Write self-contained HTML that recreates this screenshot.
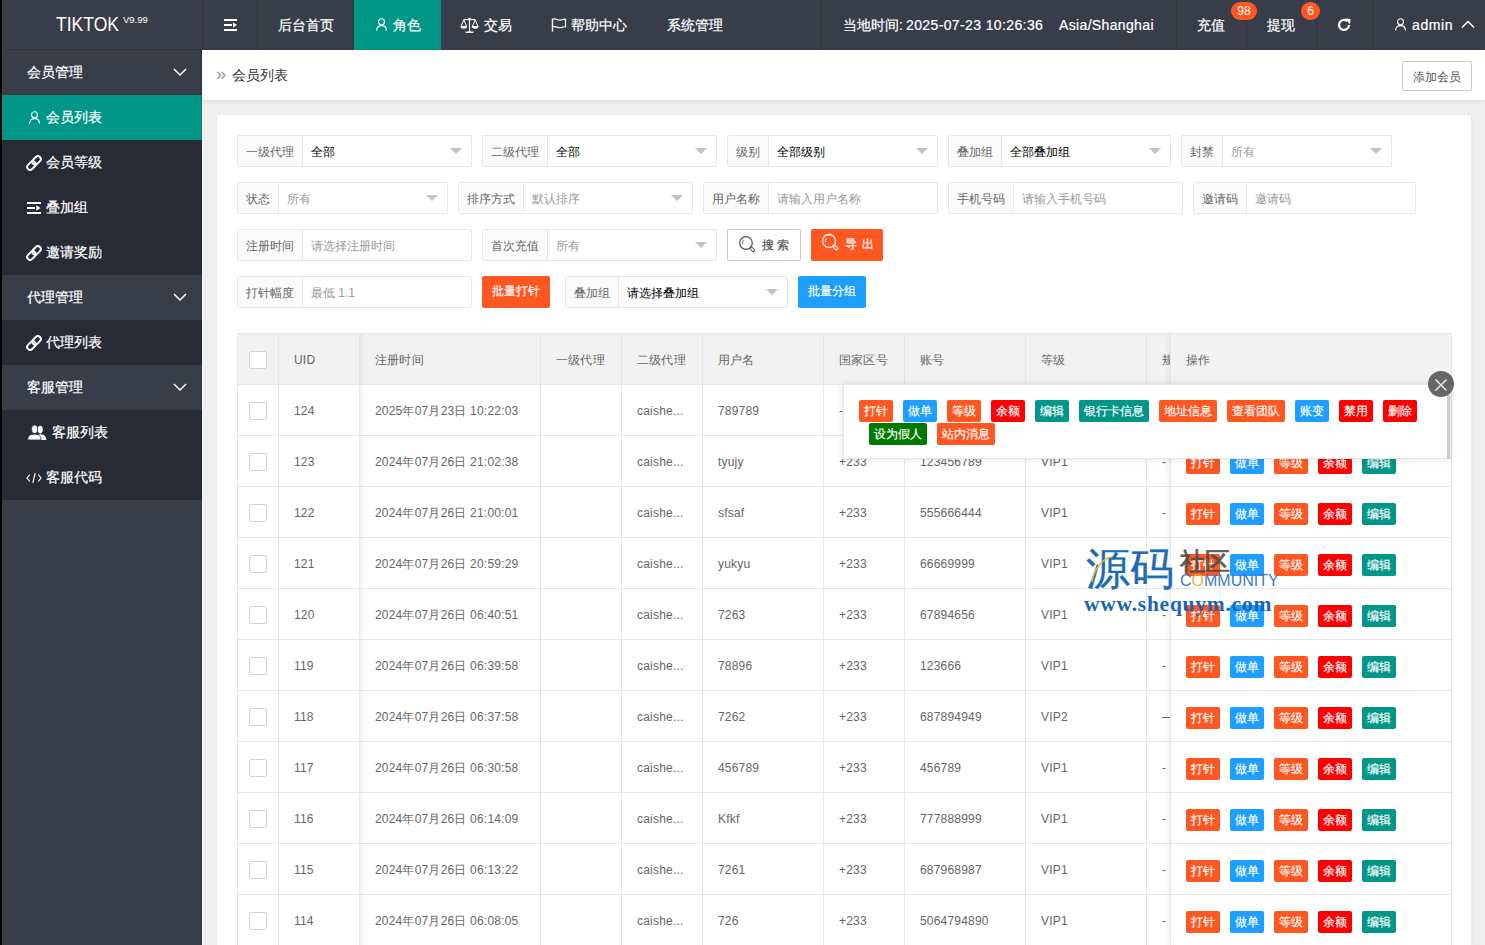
<!DOCTYPE html><html><head><meta charset="utf-8"><style>
*{box-sizing:border-box;margin:0;padding:0}
html,body{width:1485px;height:945px;overflow:hidden;background:#eee;font-family:"Liberation Sans",sans-serif;color:#666;font-size:14px}
.abs{position:absolute}
svg{display:block}
#strip{left:0;top:0;width:2px;height:945px;background:#000;z-index:50}
#header{left:0;top:0;width:1485px;height:50px;background:#393D49;color:#fff}
#logo{left:0;top:0;width:202px;height:50px;border-bottom:1px solid #30333d}
#logo .t{position:absolute;left:56px;top:13px;font-size:19.5px;line-height:22px;transform:scaleX(0.9);transform-origin:0 0}
#logo .v{position:absolute;left:123px;top:15px;font-size:9.5px;line-height:10px}
.nav{position:absolute;top:0;height:50px;line-height:50px;font-size:14px;color:#fff;white-space:nowrap;-webkit-text-stroke:0.2px #fff}
.vl{position:absolute;top:0;width:1px;height:50px;background:#30333e}
#side{left:0;top:50px;width:202px;height:895px;background:#393D49}
.si{position:absolute;left:0;width:202px;height:45px;line-height:45px;color:#fff;font-size:14px;white-space:nowrap;-webkit-text-stroke:0.2px #fff}
.si.c{background:#282B33}
.si.on{background:#009688}
.si .tx{position:absolute;top:0}
.si .ic{position:absolute}
#crumb{left:202px;top:50px;width:1283px;height:50px;background:#fff;box-shadow:0 1px 4px rgba(0,0,0,.1)}
#card{left:217px;top:115px;width:1255px;height:830px;background:#fff;box-shadow:0 1px 2px rgba(0,0,0,.05);border-right:1px solid #e8e8e8}
.fi{position:absolute;height:32px;border:1px solid #e6e6e6;border-radius:2px;background:#fff;font-size:12px;line-height:30px;white-space:nowrap}
.fi .lb{position:absolute;left:0;top:0;height:30px;background:#FBFBFB;border-right:1px solid #e6e6e6;color:#666;text-align:center;padding-top:1px}
.fi .val{position:absolute;top:1px;left:0;color:#000}
.fi .ph{position:absolute;top:1px;left:0;color:#999}
.fi .car{position:absolute;right:9px;top:12px;width:0;height:0;border-left:6px solid transparent;border-right:6px solid transparent;border-top:6px solid #c2c2c2}
.btn{position:absolute;color:#fff;font-size:12px;text-align:center;border-radius:2px;white-space:nowrap;-webkit-text-stroke:0.2px}
#tbl{left:237px;top:333px;width:1215px;height:612px;border:1px solid #e6e6e6;border-bottom:none;background:#fff;overflow:hidden}
.cell{position:absolute;font-size:12px;color:#666;white-space:nowrap;line-height:20px;letter-spacing:0.2px}
.hl{position:absolute;left:0;height:1px;background:#e6e6e6}
.vln{position:absolute;width:1px;background:#e6e6e6}
.cb{position:absolute;width:18px;height:18px;border:1px solid #d2d2d2;border-radius:2px;background:#fff}
.xs{position:absolute;height:22px;line-height:22px;font-size:12px;color:#fff;text-align:center;border-radius:2px;white-space:nowrap;-webkit-text-stroke:0.15px #fff}
</style></head><body>
<div id="strip" class="abs"></div>
<div id="header" class="abs">
<div id="logo" class="abs"><span class="t">TIKTOK</span><span class="v">V9.99</span></div>
<div class="vl" style="left:202px"></div>
<div class="vl" style="left:257px"></div>
<div class="vl" style="left:821px"></div>
<div class="vl" style="left:1176px"></div>
<div class="vl" style="left:1246px"></div>
<div class="vl" style="left:1316px"></div>
<div class="vl" style="left:1372px"></div>
<svg class="abs" style="left:224px;top:19px" width="14" height="12" viewBox="0 0 14 12"><rect x="0" y="0" width="13" height="2" fill="#fff"/><rect x="0" y="5" width="8" height="2" fill="#fff"/><rect x="0" y="10" width="13" height="2" fill="#fff"/><path d="M9 3.5 L13 6 L9 8.5Z" fill="#fff"/></svg>
<div class="nav" style="left:278px">后台首页</div>
<div class="abs" style="left:354px;top:0;width:87px;height:50px;background:#009688"></div>
<svg class="abs" style="left:376px;top:18px" width="11" height="13" viewBox="0 0 11 13"><circle cx="5.5" cy="3.7" r="3" fill="none" stroke="#fff" stroke-width="1.15"/><path d="M0.6 12.5 C0.6 9.2 2.6 7.6 5.5 7.6 C8.4 7.6 10.4 9.2 10.4 12.5" fill="none" stroke="#fff" stroke-width="1.15"/></svg>
<div class="nav" style="left:393px">角色</div>
<svg class="abs" style="left:460px;top:17px" width="20" height="17" viewBox="0 0 20 17"><g stroke="#fff" fill="none"><path d="M9.5 2.5 V15" stroke-width="1.2"/><path d="M3.5 2.6 H15.5" stroke-width="1.1"/><path d="M5.5 15.2 H13.5" stroke-width="1.4"/><path d="M3.8 3 L1 9.3 M3.8 3 L6.6 9.3 M15.2 3 L12.4 9.3 M15.2 3 L18 9.3" stroke-width="1"/></g><circle cx="9.5" cy="2" r="1.3" fill="#fff"/><path d="M0.4 9.1 H7.2 A3.4 2.6 0 0 1 0.4 9.1Z M11.8 9.1 H18.6 A3.4 2.6 0 0 1 11.8 9.1Z" fill="#fff"/></svg>
<div class="nav" style="left:484px">交易</div>
<svg class="abs" style="left:551px;top:18px" width="16" height="14" viewBox="0 0 16 14"><path d="M1.5 0.5 V13.5" stroke="#fff" stroke-width="1.5"/><path d="M2 1.2 C5 0 7 3 10 2 C12 1.4 13 1 14.5 1.2 V8.8 C13 8.6 12 9 10 9.6 C7 10.6 5 7.6 2 8.8" fill="none" stroke="#fff" stroke-width="1.2"/></svg>
<div class="nav" style="left:571px">帮助中心</div>
<div class="nav" style="left:667px">系统管理</div>
<div class="nav" style="left:843px">当地时间:</div>
<div class="nav" style="left:906px;letter-spacing:0.38px">2025-07-23 10:26:36</div>
<div class="nav" style="left:1059px;letter-spacing:0.35px">Asia/Shanghai</div>
<div class="nav" style="left:1197px">充值</div>
<div class="abs" style="left:1231px;top:2px;width:26px;height:18px;border-radius:9px;background:#FF5722;color:#fff;font-size:12px;line-height:18px;text-align:center">98</div>
<div class="nav" style="left:1267px">提现</div>
<div class="abs" style="left:1301px;top:2px;width:19px;height:18px;border-radius:9px;background:#FF5722;color:#fff;font-size:12px;line-height:18px;text-align:center">6</div>
<svg class="abs" style="left:1337px;top:18px" width="14" height="14" viewBox="0 0 14 14"><path d="M12 7 A5 5 0 1 1 10.3 3.2" fill="none" stroke="#fff" stroke-width="2.2"/><path d="M8 0.5 L13.5 1 L13 6.5 Z" fill="#fff"/></svg>
<svg class="abs" style="left:1395px;top:18px" width="11" height="13" viewBox="0 0 11 13"><circle cx="5.5" cy="3.7" r="3" fill="none" stroke="#fff" stroke-width="1.15"/><path d="M0.6 12.5 C0.6 9.2 2.6 7.6 5.5 7.6 C8.4 7.6 10.4 9.2 10.4 12.5" fill="none" stroke="#fff" stroke-width="1.15"/></svg>
<div class="nav" style="left:1412px;letter-spacing:0.6px">admin</div>
<svg class="abs" style="left:1461px;top:20px" width="14" height="8" viewBox="0 0 14 8"><path d="M1 7.5 L7 1.5 L13 7.5" fill="none" stroke="#fff" stroke-width="1.5"/></svg>
</div>
<div id="side" class="abs">
<div class="si g" style="top:0px"><span class="tx" style="left:27px">会员管理</span><svg class="ic" style="left:173px;top:18px" width="14" height="9" viewBox="0 0 14 9"><path d="M1 1 L7 7 L13 1" fill="none" stroke="#fff" stroke-width="1.5"/></svg></div>
<div class="si on" style="top:45px"><span class="tx" style="left:46px">会员列表</span><svg class="ic" style="left:29px;top:16px" width="11" height="13" viewBox="0 0 11 13"><circle cx="5.5" cy="3.7" r="3" fill="none" stroke="#fff" stroke-width="1.15"/><path d="M0.6 12.5 C0.6 9.2 2.6 7.6 5.5 7.6 C8.4 7.6 10.4 9.2 10.4 12.5" fill="none" stroke="#fff" stroke-width="1.15"/></svg></div>
<div class="si c" style="top:90px"><span class="tx" style="left:46px">会员等级</span><svg class="ic" style="left:25px;top:14px" width="18" height="18" viewBox="0 0 18 18"><g transform="rotate(-45 9 9)" fill="none" stroke="#fff" stroke-width="2"><rect x="0.6" y="6.1" width="9.6" height="5.8" rx="2.9"/><rect x="7.8" y="6.1" width="9.6" height="5.8" rx="2.9"/></g></svg></div>
<div class="si c" style="top:135px"><span class="tx" style="left:46px">叠加组</span><svg class="ic" style="left:27px;top:17px" width="15" height="12" viewBox="0 0 15 12"><rect x="0" y="0" width="14" height="2" fill="#fff"/><rect x="0" y="5" width="8" height="2" fill="#fff"/><rect x="0" y="10" width="14" height="2" fill="#fff"/><path d="M9.3 3.3 L13.6 6 L9.3 8.7Z" fill="#fff"/></svg></div>
<div class="si c" style="top:180px"><span class="tx" style="left:46px">邀请奖励</span><svg class="ic" style="left:25px;top:14px" width="18" height="18" viewBox="0 0 18 18"><g transform="rotate(-45 9 9)" fill="none" stroke="#fff" stroke-width="2"><rect x="0.6" y="6.1" width="9.6" height="5.8" rx="2.9"/><rect x="7.8" y="6.1" width="9.6" height="5.8" rx="2.9"/></g></svg></div>
<div class="si g" style="top:225px"><span class="tx" style="left:27px">代理管理</span><svg class="ic" style="left:173px;top:18px" width="14" height="9" viewBox="0 0 14 9"><path d="M1 1 L7 7 L13 1" fill="none" stroke="#fff" stroke-width="1.5"/></svg></div>
<div class="si c" style="top:270px"><span class="tx" style="left:46px">代理列表</span><svg class="ic" style="left:25px;top:14px" width="18" height="18" viewBox="0 0 18 18"><g transform="rotate(-45 9 9)" fill="none" stroke="#fff" stroke-width="2"><rect x="0.6" y="6.1" width="9.6" height="5.8" rx="2.9"/><rect x="7.8" y="6.1" width="9.6" height="5.8" rx="2.9"/></g></svg></div>
<div class="si g" style="top:315px"><span class="tx" style="left:27px">客服管理</span><svg class="ic" style="left:173px;top:18px" width="14" height="9" viewBox="0 0 14 9"><path d="M1 1 L7 7 L13 1" fill="none" stroke="#fff" stroke-width="1.5"/></svg></div>
<div class="si c" style="top:360px"><span class="tx" style="left:52px">客服列表</span><svg class="ic" style="left:27px;top:15px" width="20" height="16" viewBox="0 0 20 16"><ellipse cx="13.2" cy="4.6" rx="2.6" ry="3.8" fill="#fff"/><path d="M10 15 C10 11 11.5 9.3 13.2 9.3 C15.5 9.3 19.3 10.3 19.3 15Z" fill="#fff"/><ellipse cx="7.6" cy="4.3" rx="3" ry="4.2" fill="#fff" stroke="#282B33" stroke-width="0.8"/><path d="M0.8 15 C0.8 10.5 3 9.2 7.6 9.2 C12 9.2 14 10.5 14 15Z" fill="#fff" stroke="#282B33" stroke-width="0.8"/></svg></div>
<div class="si c" style="top:405px"><span class="tx" style="left:46px">客服代码</span><svg class="ic" style="left:26px;top:17px" width="16" height="12" viewBox="0 0 16 12"><path d="M3.8 2.5 L1 6 L3.8 9.5 M12.2 2.5 L15 6 L12.2 9.5 M9.2 1.2 L6.8 10.8" fill="none" stroke="#fff" stroke-width="1.2"/></svg></div>
<div class="abs" style="left:201px;top:0;width:1px;height:895px;background:rgba(0,0,0,.12)"></div>
</div>
<div class="abs" style="left:202px;top:100px;width:1px;height:845px;background:#fafaf8"></div>
<div id="crumb" class="abs">
<div class="abs" style="left:14px;top:13px;font-size:18px;line-height:22px;color:#999">&raquo;</div>
<div class="abs" style="left:30px;top:15px;font-size:14px;line-height:20px;color:#333">会员列表</div>
<div class="abs" style="left:1200px;top:11px;width:70px;height:30px;border:1px solid #C9C9C9;border-radius:2px;background:#fff;color:#555;font-size:12px;line-height:30px;text-align:center">添加会员</div>
</div>
<div id="card" class="abs"></div>
<div class="fi" style="left:237px;top:135px;width:235px"><div class="lb" style="width:65px">一级代理</div><div class="val" style="left:73px">全部</div><div class="car"></div></div>
<div class="fi" style="left:482px;top:135px;width:235px"><div class="lb" style="width:65px">二级代理</div><div class="val" style="left:73px">全部</div><div class="car"></div></div>
<div class="fi" style="left:727px;top:135px;width:211px"><div class="lb" style="width:41px">级别</div><div class="val" style="left:49px">全部级别</div><div class="car"></div></div>
<div class="fi" style="left:948px;top:135px;width:223px"><div class="lb" style="width:53px">叠加组</div><div class="val" style="left:61px">全部叠加组</div><div class="car"></div></div>
<div class="fi" style="left:1181px;top:135px;width:211px"><div class="lb" style="width:41px">封禁</div><div class="ph" style="left:49px">所有</div><div class="car"></div></div>
<div class="fi" style="left:237px;top:182px;width:211px"><div class="lb" style="width:41px">状态</div><div class="ph" style="left:49px">所有</div><div class="car"></div></div>
<div class="fi" style="left:458px;top:182px;width:235px"><div class="lb" style="width:65px">排序方式</div><div class="ph" style="left:73px">默认排序</div><div class="car"></div></div>
<div class="fi" style="left:703px;top:182px;width:235px"><div class="lb" style="width:65px">用户名称</div><div class="ph" style="left:73px">请输入用户名称</div></div>
<div class="fi" style="left:948px;top:182px;width:235px"><div class="lb" style="width:65px">手机号码</div><div class="ph" style="left:73px">请输入手机号码</div></div>
<div class="fi" style="left:1193px;top:182px;width:223px"><div class="lb" style="width:53px">邀请码</div><div class="ph" style="left:61px">邀请码</div></div>
<div class="fi" style="left:237px;top:229px;width:235px"><div class="lb" style="width:65px">注册时间</div><div class="ph" style="left:73px">请选择注册时间</div></div>
<div class="fi" style="left:482px;top:229px;width:235px"><div class="lb" style="width:65px">首次充值</div><div class="ph" style="left:73px">所有</div><div class="car"></div></div>
<div class="btn" style="left:727px;top:229px;width:74px;height:32px;line-height:30px;border:1px solid #C9C9C9;background:#fff;color:#555;text-align:left;padding-left:34px">搜 索</div>
<svg class="abs" style="left:738px;top:235px" width="18" height="19" viewBox="0 0 18 19"><circle cx="8" cy="8" r="6.3" fill="none" stroke="#555" stroke-width="1.2"/><path d="M4.6 9.2 A3.8 3.8 0 0 1 5.6 5.4" fill="none" stroke="#555" stroke-width="0.9"/><g transform="rotate(45 14.2 14.2)"><rect x="11.8" y="12.9" width="5.2" height="2.6" rx="1.3" fill="none" stroke="#555" stroke-width="1"/></g></svg>
<div class="btn" style="left:811px;top:229px;width:72px;height:32px;line-height:30px;background:#FF5722;text-align:left;padding-left:34px;letter-spacing:1px">导 出</div>
<svg class="abs" style="left:821px;top:233px" width="18" height="19" viewBox="0 0 18 19"><circle cx="8" cy="8" r="6.5" fill="none" stroke="#fff" stroke-width="1.3"/><path d="M4.5 9.3 A3.9 3.9 0 0 1 5.5 5.3" fill="none" stroke="#fff" stroke-width="0.9"/><g transform="rotate(45 14.2 14.2)"><rect x="11.8" y="12.9" width="5.4" height="2.7" rx="1.35" fill="none" stroke="#fff" stroke-width="1.1"/></g></svg>
<div class="fi" style="left:237px;top:276px;width:235px"><div class="lb" style="width:65px">打针幅度</div><div class="ph" style="left:73px">最低 1.1</div></div>
<div class="btn" style="left:482px;top:276px;width:68px;height:32px;line-height:30px;background:#FF5722">批量打针</div>
<div class="fi" style="left:565px;top:276px;width:223px"><div class="lb" style="width:53px">叠加组</div><div class="val" style="left:61px">请选择叠加组</div><div class="car"></div></div>
<div class="btn" style="left:798px;top:276px;width:68px;height:32px;line-height:30px;background:#1E9FFF">批量分组</div>
<div id="tbl" class="abs">
<div class="abs" style="left:0;top:0;width:1215px;height:50px;background:#f2f2f2"></div>
<div class="vln" style="left:40px;top:0;height:612px"></div>
<div class="vln" style="left:121px;top:0;height:612px"></div>
<div class="vln" style="left:302px;top:0;height:612px"></div>
<div class="vln" style="left:383px;top:0;height:612px"></div>
<div class="vln" style="left:464px;top:0;height:612px"></div>
<div class="vln" style="left:585px;top:0;height:612px"></div>
<div class="vln" style="left:666px;top:0;height:612px"></div>
<div class="vln" style="left:787px;top:0;height:612px"></div>
<div class="vln" style="left:908px;top:0;height:612px"></div>
<div class="hl" style="top:50px;width:1215px"></div>
<div class="hl" style="top:101px;width:1215px"></div>
<div class="hl" style="top:152px;width:1215px"></div>
<div class="hl" style="top:203px;width:1215px"></div>
<div class="hl" style="top:254px;width:1215px"></div>
<div class="hl" style="top:305px;width:1215px"></div>
<div class="hl" style="top:356px;width:1215px"></div>
<div class="hl" style="top:407px;width:1215px"></div>
<div class="hl" style="top:458px;width:1215px"></div>
<div class="hl" style="top:509px;width:1215px"></div>
<div class="hl" style="top:560px;width:1215px"></div>
<div class="hl" style="top:611px;width:1215px"></div>
<div class="cell" style="left:56px;top:16px">UID</div>
<div class="cell" style="left:137px;top:16px">注册时间</div>
<div class="cell" style="left:318px;top:16px">一级代理</div>
<div class="cell" style="left:399px;top:16px">二级代理</div>
<div class="cell" style="left:480px;top:16px">用户名</div>
<div class="cell" style="left:601px;top:16px">国家区号</div>
<div class="cell" style="left:682px;top:16px">账号</div>
<div class="cell" style="left:803px;top:16px">等级</div>
<div class="cell" style="left:924px;top:16px">规则</div>
<div class="cb" style="left:11px;top:17px"></div>
<div class="cb" style="left:11px;top:68px"></div>
<div class="cell" style="left:56px;top:67px">124</div>
<div class="cell" style="left:137px;top:67px">2025年07月23日 10:22:03</div>
<div class="cell" style="left:399px;top:67px">caishe...</div>
<div class="cell" style="left:480px;top:67px">789789</div>
<div class="cell" style="left:601px;top:67px">-</div>
<div class="cell" style="left:682px;top:67px">123456789</div>
<div class="cell" style="left:803px;top:67px">VIP1</div>
<div class="cell" style="left:924px;top:67px">-</div>
<div class="cb" style="left:11px;top:119px"></div>
<div class="cell" style="left:56px;top:118px">123</div>
<div class="cell" style="left:137px;top:118px">2024年07月26日 21:02:38</div>
<div class="cell" style="left:399px;top:118px">caishe...</div>
<div class="cell" style="left:480px;top:118px">tyujy</div>
<div class="cell" style="left:601px;top:118px">+233</div>
<div class="cell" style="left:682px;top:118px">123456789</div>
<div class="cell" style="left:803px;top:118px">VIP1</div>
<div class="cell" style="left:924px;top:118px">-</div>
<div class="cb" style="left:11px;top:170px"></div>
<div class="cell" style="left:56px;top:169px">122</div>
<div class="cell" style="left:137px;top:169px">2024年07月26日 21:00:01</div>
<div class="cell" style="left:399px;top:169px">caishe...</div>
<div class="cell" style="left:480px;top:169px">sfsaf</div>
<div class="cell" style="left:601px;top:169px">+233</div>
<div class="cell" style="left:682px;top:169px">555666444</div>
<div class="cell" style="left:803px;top:169px">VIP1</div>
<div class="cell" style="left:924px;top:169px">-</div>
<div class="cb" style="left:11px;top:221px"></div>
<div class="cell" style="left:56px;top:220px">121</div>
<div class="cell" style="left:137px;top:220px">2024年07月26日 20:59:29</div>
<div class="cell" style="left:399px;top:220px">caishe...</div>
<div class="cell" style="left:480px;top:220px">yukyu</div>
<div class="cell" style="left:601px;top:220px">+233</div>
<div class="cell" style="left:682px;top:220px">66669999</div>
<div class="cell" style="left:803px;top:220px">VIP1</div>
<div class="cell" style="left:924px;top:220px">-</div>
<div class="cb" style="left:11px;top:272px"></div>
<div class="cell" style="left:56px;top:271px">120</div>
<div class="cell" style="left:137px;top:271px">2024年07月26日 06:40:51</div>
<div class="cell" style="left:399px;top:271px">caishe...</div>
<div class="cell" style="left:480px;top:271px">7263</div>
<div class="cell" style="left:601px;top:271px">+233</div>
<div class="cell" style="left:682px;top:271px">67894656</div>
<div class="cell" style="left:803px;top:271px">VIP1</div>
<div class="cell" style="left:924px;top:271px">-</div>
<div class="cb" style="left:11px;top:323px"></div>
<div class="cell" style="left:56px;top:322px">119</div>
<div class="cell" style="left:137px;top:322px">2024年07月26日 06:39:58</div>
<div class="cell" style="left:399px;top:322px">caishe...</div>
<div class="cell" style="left:480px;top:322px">78896</div>
<div class="cell" style="left:601px;top:322px">+233</div>
<div class="cell" style="left:682px;top:322px">123666</div>
<div class="cell" style="left:803px;top:322px">VIP1</div>
<div class="cell" style="left:924px;top:322px">-</div>
<div class="cb" style="left:11px;top:374px"></div>
<div class="cell" style="left:56px;top:373px">118</div>
<div class="cell" style="left:137px;top:373px">2024年07月26日 06:37:58</div>
<div class="cell" style="left:399px;top:373px">caishe...</div>
<div class="cell" style="left:480px;top:373px">7262</div>
<div class="cell" style="left:601px;top:373px">+233</div>
<div class="cell" style="left:682px;top:373px">687894949</div>
<div class="cell" style="left:803px;top:373px">VIP2</div>
<div class="cell" style="left:924px;top:373px">—</div>
<div class="cb" style="left:11px;top:425px"></div>
<div class="cell" style="left:56px;top:424px">117</div>
<div class="cell" style="left:137px;top:424px">2024年07月26日 06:30:58</div>
<div class="cell" style="left:399px;top:424px">caishe...</div>
<div class="cell" style="left:480px;top:424px">456789</div>
<div class="cell" style="left:601px;top:424px">+233</div>
<div class="cell" style="left:682px;top:424px">456789</div>
<div class="cell" style="left:803px;top:424px">VIP1</div>
<div class="cell" style="left:924px;top:424px">-</div>
<div class="cb" style="left:11px;top:476px"></div>
<div class="cell" style="left:56px;top:475px">116</div>
<div class="cell" style="left:137px;top:475px">2024年07月26日 06:14:09</div>
<div class="cell" style="left:399px;top:475px">caishe...</div>
<div class="cell" style="left:480px;top:475px">Kfkf</div>
<div class="cell" style="left:601px;top:475px">+233</div>
<div class="cell" style="left:682px;top:475px">777888999</div>
<div class="cell" style="left:803px;top:475px">VIP1</div>
<div class="cell" style="left:924px;top:475px">-</div>
<div class="cb" style="left:11px;top:527px"></div>
<div class="cell" style="left:56px;top:526px">115</div>
<div class="cell" style="left:137px;top:526px">2024年07月26日 06:13:22</div>
<div class="cell" style="left:399px;top:526px">caishe...</div>
<div class="cell" style="left:480px;top:526px">7261</div>
<div class="cell" style="left:601px;top:526px">+233</div>
<div class="cell" style="left:682px;top:526px">687968987</div>
<div class="cell" style="left:803px;top:526px">VIP1</div>
<div class="cell" style="left:924px;top:526px">-</div>
<div class="cb" style="left:11px;top:578px"></div>
<div class="cell" style="left:56px;top:577px">114</div>
<div class="cell" style="left:137px;top:577px">2024年07月26日 06:08:05</div>
<div class="cell" style="left:399px;top:577px">caishe...</div>
<div class="cell" style="left:480px;top:577px">726</div>
<div class="cell" style="left:601px;top:577px">+233</div>
<div class="cell" style="left:682px;top:577px">5064794890</div>
<div class="cell" style="left:803px;top:577px">VIP1</div>
<div class="cell" style="left:924px;top:577px">-</div>
<div class="abs" style="left:122px;top:0;width:6px;height:612px;background:linear-gradient(to right,rgba(0,0,0,.05),rgba(0,0,0,0))"></div>
<div class="abs" style="left:932px;top:0;width:281px;height:612px;background:#fff;border-left:1px solid #e6e6e6;box-shadow:-2px 0 6px rgba(0,0,0,.06)">
<div class="abs" style="left:0;top:0;width:300px;height:50px;background:#f2f2f2"></div>
<div class="hl" style="top:50px;width:300px"></div>
<div class="hl" style="top:101px;width:300px"></div>
<div class="hl" style="top:152px;width:300px"></div>
<div class="hl" style="top:203px;width:300px"></div>
<div class="hl" style="top:254px;width:300px"></div>
<div class="hl" style="top:305px;width:300px"></div>
<div class="hl" style="top:356px;width:300px"></div>
<div class="hl" style="top:407px;width:300px"></div>
<div class="hl" style="top:458px;width:300px"></div>
<div class="hl" style="top:509px;width:300px"></div>
<div class="hl" style="top:560px;width:300px"></div>
<div class="hl" style="top:611px;width:300px"></div>
<div class="cell" style="left:15px;top:16px">操作</div>
<div class="xs" style="left:15px;top:67px;width:34px;background:#FF5722">打针</div>
<div class="xs" style="left:59px;top:67px;width:34px;background:#1E9FFF">做单</div>
<div class="xs" style="left:103px;top:67px;width:34px;background:#FF5722">等级</div>
<div class="xs" style="left:147px;top:67px;width:34px;background:#FF0000">余额</div>
<div class="xs" style="left:191px;top:67px;width:34px;background:#009688">编辑</div>
<div class="xs" style="left:15px;top:118px;width:34px;background:#FF5722">打针</div>
<div class="xs" style="left:59px;top:118px;width:34px;background:#1E9FFF">做单</div>
<div class="xs" style="left:103px;top:118px;width:34px;background:#FF5722">等级</div>
<div class="xs" style="left:147px;top:118px;width:34px;background:#FF0000">余额</div>
<div class="xs" style="left:191px;top:118px;width:34px;background:#009688">编辑</div>
<div class="xs" style="left:15px;top:169px;width:34px;background:#FF5722">打针</div>
<div class="xs" style="left:59px;top:169px;width:34px;background:#1E9FFF">做单</div>
<div class="xs" style="left:103px;top:169px;width:34px;background:#FF5722">等级</div>
<div class="xs" style="left:147px;top:169px;width:34px;background:#FF0000">余额</div>
<div class="xs" style="left:191px;top:169px;width:34px;background:#009688">编辑</div>
<div class="xs" style="left:15px;top:220px;width:34px;background:#FF5722">打针</div>
<div class="xs" style="left:59px;top:220px;width:34px;background:#1E9FFF">做单</div>
<div class="xs" style="left:103px;top:220px;width:34px;background:#FF5722">等级</div>
<div class="xs" style="left:147px;top:220px;width:34px;background:#FF0000">余额</div>
<div class="xs" style="left:191px;top:220px;width:34px;background:#009688">编辑</div>
<div class="xs" style="left:15px;top:271px;width:34px;background:#FF5722">打针</div>
<div class="xs" style="left:59px;top:271px;width:34px;background:#1E9FFF">做单</div>
<div class="xs" style="left:103px;top:271px;width:34px;background:#FF5722">等级</div>
<div class="xs" style="left:147px;top:271px;width:34px;background:#FF0000">余额</div>
<div class="xs" style="left:191px;top:271px;width:34px;background:#009688">编辑</div>
<div class="xs" style="left:15px;top:322px;width:34px;background:#FF5722">打针</div>
<div class="xs" style="left:59px;top:322px;width:34px;background:#1E9FFF">做单</div>
<div class="xs" style="left:103px;top:322px;width:34px;background:#FF5722">等级</div>
<div class="xs" style="left:147px;top:322px;width:34px;background:#FF0000">余额</div>
<div class="xs" style="left:191px;top:322px;width:34px;background:#009688">编辑</div>
<div class="xs" style="left:15px;top:373px;width:34px;background:#FF5722">打针</div>
<div class="xs" style="left:59px;top:373px;width:34px;background:#1E9FFF">做单</div>
<div class="xs" style="left:103px;top:373px;width:34px;background:#FF5722">等级</div>
<div class="xs" style="left:147px;top:373px;width:34px;background:#FF0000">余额</div>
<div class="xs" style="left:191px;top:373px;width:34px;background:#009688">编辑</div>
<div class="xs" style="left:15px;top:424px;width:34px;background:#FF5722">打针</div>
<div class="xs" style="left:59px;top:424px;width:34px;background:#1E9FFF">做单</div>
<div class="xs" style="left:103px;top:424px;width:34px;background:#FF5722">等级</div>
<div class="xs" style="left:147px;top:424px;width:34px;background:#FF0000">余额</div>
<div class="xs" style="left:191px;top:424px;width:34px;background:#009688">编辑</div>
<div class="xs" style="left:15px;top:475px;width:34px;background:#FF5722">打针</div>
<div class="xs" style="left:59px;top:475px;width:34px;background:#1E9FFF">做单</div>
<div class="xs" style="left:103px;top:475px;width:34px;background:#FF5722">等级</div>
<div class="xs" style="left:147px;top:475px;width:34px;background:#FF0000">余额</div>
<div class="xs" style="left:191px;top:475px;width:34px;background:#009688">编辑</div>
<div class="xs" style="left:15px;top:526px;width:34px;background:#FF5722">打针</div>
<div class="xs" style="left:59px;top:526px;width:34px;background:#1E9FFF">做单</div>
<div class="xs" style="left:103px;top:526px;width:34px;background:#FF5722">等级</div>
<div class="xs" style="left:147px;top:526px;width:34px;background:#FF0000">余额</div>
<div class="xs" style="left:191px;top:526px;width:34px;background:#009688">编辑</div>
<div class="xs" style="left:15px;top:577px;width:34px;background:#FF5722">打针</div>
<div class="xs" style="left:59px;top:577px;width:34px;background:#1E9FFF">做单</div>
<div class="xs" style="left:103px;top:577px;width:34px;background:#FF5722">等级</div>
<div class="xs" style="left:147px;top:577px;width:34px;background:#FF0000">余额</div>
<div class="xs" style="left:191px;top:577px;width:34px;background:#009688">编辑</div>
</div>
</div>
<div class="abs" style="left:843px;top:384px;width:608px;height:75px;background:#fff;border:1px solid #e6e6e6;box-shadow:0 0 8px rgba(0,0,0,.12)">
<div class="abs" style="left:603px;top:10px;width:3px;height:64px;background:#ccc"></div>
</div>
<div class="xs" style="left:859px;top:400px;width:34px;background:#FF5722">打针</div>
<div class="xs" style="left:903px;top:400px;width:34px;background:#1E9FFF">做单</div>
<div class="xs" style="left:947px;top:400px;width:34px;background:#FF5722">等级</div>
<div class="xs" style="left:991px;top:400px;width:34px;background:#FF0000">余额</div>
<div class="xs" style="left:1035px;top:400px;width:34px;background:#009688">编辑</div>
<div class="xs" style="left:1079px;top:400px;width:70px;background:#009688">银行卡信息</div>
<div class="xs" style="left:1159px;top:400px;width:58px;background:#FF5722">地址信息</div>
<div class="xs" style="left:1227px;top:400px;width:58px;background:#FF5722">查看团队</div>
<div class="xs" style="left:1295px;top:400px;width:34px;background:#1E9FFF">账变</div>
<div class="xs" style="left:1339px;top:400px;width:34px;background:#FF0000">禁用</div>
<div class="xs" style="left:1383px;top:400px;width:34px;background:#FF0000">删除</div>
<div class="xs" style="left:869px;top:423px;width:58px;background:#007A00">设为假人</div>
<div class="xs" style="left:937px;top:423px;width:58px;background:#FF5722">站内消息</div>
<div class="abs" style="left:1428px;top:371px;width:26px;height:26px;border-radius:13px;background:#666"></div>
<svg class="abs" style="left:1435px;top:379px" width="12" height="12" viewBox="0 0 12 12"><path d="M0.5 0.5 L11.5 11.5 M11.5 0.5 L0.5 11.5" stroke="#fff" stroke-width="1.1"/></svg>
<div class="abs" style="left:1086px;top:541px;font-size:44px;line-height:56px;color:#1C6BB7;letter-spacing:-0.5px;-webkit-text-stroke:0.3px #1C6BB7">源码</div>
<svg class="abs" style="left:1088px;top:552px" width="30" height="36" viewBox="0 0 30 36"><path d="M4 30 C6 18 14 6 24 5" fill="none" stroke="#F2B134" stroke-width="1.5"/></svg>
<div class="abs" style="left:1180px;top:547px;font-size:25px;line-height:28px;color:rgba(75,75,75,.9);font-weight:bold">社区</div>
<div class="abs" style="left:1180px;top:572px;font-size:16px;line-height:17px;color:#3C7BC2;letter-spacing:0px">C<span style="color:#F2B134">O</span>MMUNITY</div>
<div class="abs" style="left:1084px;top:592px;font-family:'Liberation Serif',serif;font-size:21.5px;line-height:24px;color:#1A66B3;font-weight:bold;letter-spacing:0.75px">www.shequym.com</div>
</body></html>
